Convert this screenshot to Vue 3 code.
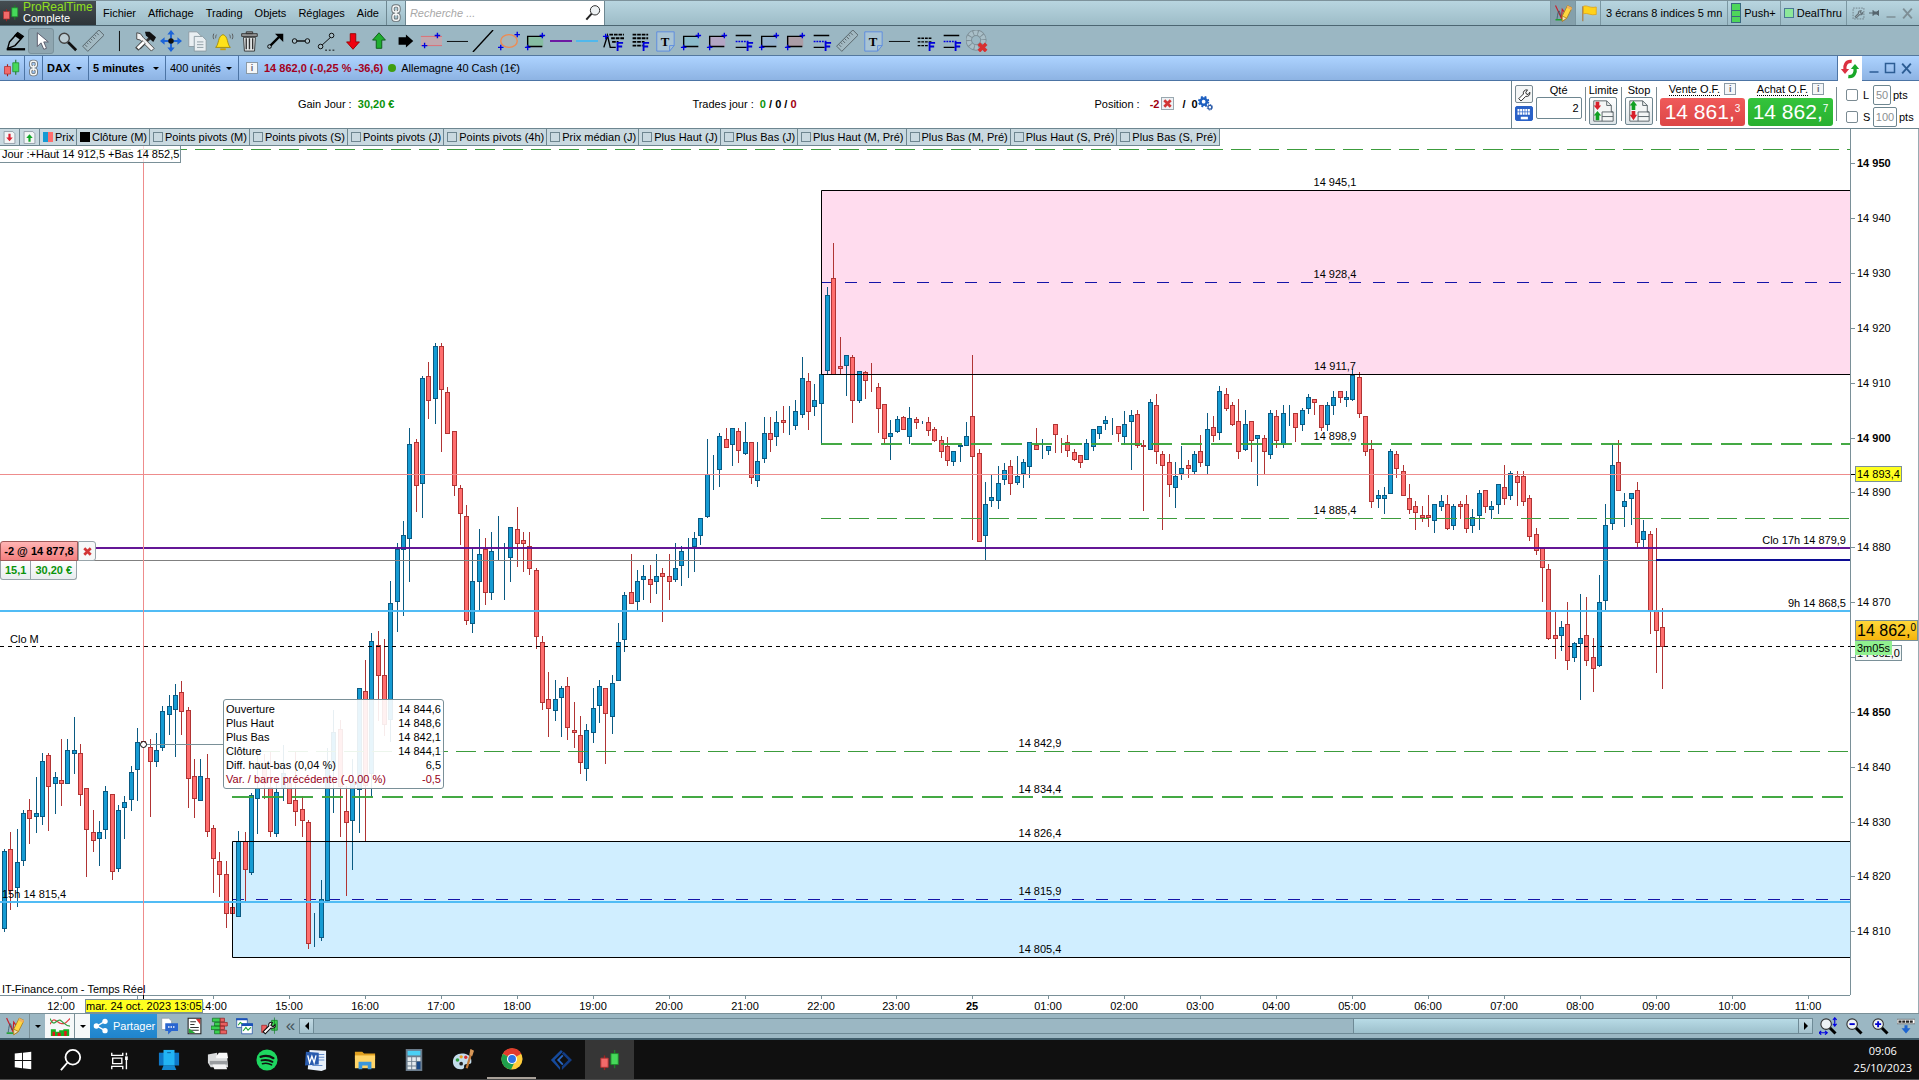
<script setup>
const menus = ['Fichier', 'Affichage', 'Trading', 'Objets', 'Réglages', 'Aide']

const F = '<path d="M17 23V14h6M17 18h5" fill="none" stroke="#0000d8" stroke-width="2"/>'
const plus = (x, y) => `<path d="M${x - 3} ${y}h6M${x} ${y - 3}v6" stroke="#0000e0" stroke-width="1.500"/>`
const zone = (fill, line) =>
  `<path d="M3 7h18v11H3z" fill="${fill}"/><path d="M4 18V7h17M3 18h17" fill="none" stroke="${line}" stroke-width="1.500"/>` + plus(20, 6) + plus(4, 19)
const levels =
  '<path d="M4 6h17M4 19h12" stroke="#000" stroke-width="1.500"/><path d="M4 12.500h15" stroke="#0000e0" stroke-dasharray="2 1" stroke-width="1.500"/>' + F
const fibo = '<path d="M5 5h17M5 9h17M5 13h13M5 17h11" stroke="#000" stroke-width="2" stroke-dasharray="4 1"/>' + F
const ruler =
  '<g transform="rotate(-45 12 12)"><path d="M0 8h25v8H0z" fill="#a3bac3" stroke="#59666c"/><path d="M3 8v4M6 8v3M9 8v4M12 8v3M15 8v4M18 8v3M21 8v4" stroke="#59666c"/></g>'
const note =
  '<path d="M3 2h19v15l-5 6H3z" fill="#a9c4d4" stroke="#5a8ae0"/><path d="M17 23v-6h5" fill="none" stroke="#5a8ae0"/><text x="12" y="17" text-anchor="middle" font-family="Liberation Serif, serif" font-weight="bold" font-size="14">T</text>'
const candles =
  '<path d="M17 1v20" stroke="#1f7a2a" stroke-width="1.500"/><path d="M6 7v16" stroke="#a02020" stroke-width="1.500"/><path d="M2 10h8v10H2z" fill="#f26a6a" stroke="#b03030"/><path d="M13 5h8v12h-8z" fill="#46d95a" stroke="#1f8a2c"/>'
const link =
  '<g fill="none" stroke="#6d7478" stroke-width="4.500"><rect x="8" y="2.500" width="8" height="8" rx="3"/><rect x="8" y="13.500" width="8" height="8" rx="3"/><path d="M12 8v8"/></g><g fill="none" stroke="#f6f8f8" stroke-width="2"><rect x="8" y="2.500" width="8" height="8" rx="3"/><rect x="8" y="13.500" width="8" height="8" rx="3"/><path d="M12 8v8"/></g>'
const wrench =
  '<path d="M3 20l8-8c-1-4 2-8 7-7l-3 4 1 3 3 1 3-4c1 5-3 8-7 7l-8 8z" fill="#fff" stroke="#111" stroke-width="1.500"/>'
const chartPencil =
  '<path d="M2 2l8 17 1-12 6 8" fill="none" stroke="#c8202c" stroke-width="1.500"/><path d="M4 20c2-14 3-14 5-3" fill="none" stroke="#305060"/><path d="M2 21h9" stroke="#1fa030" stroke-width="2"/><path d="M18 2l6 3-7 14-6 4v-7z" fill="#ffd640" stroke="#a87818"/><path d="M11 16l6 3-6 4z" fill="#f4e2b8" stroke="#a87818"/><path d="M18 2l6 3-1 3-6-3z" fill="#f0b060"/>'
const zoomGlass = (inside) =>
  `<path d="M14 14l8 8" stroke="#000" stroke-width="4"/><circle cx="9.500" cy="9.500" r="7" fill="#eef3f5" stroke="#333" stroke-width="1.500"/>${inside}`
const orders = (up, down) =>
  `<path d="M3 2h14l5 5v7h2v10H3z" fill="#f4f6f6" stroke="#555f64"/><path d="M17 2v5h5M12 14h12M12 19h12M12 14v10" fill="none" stroke="#555f64"/><path d="${up}" fill="#12a022"/><path d="${down}" fill="#d81f2a"/>`

const icons = {
  candles, link, wrench, chartPencil,
  pen: '<path d="M4 20L6 13 15 3l6 4-9 10z" fill="#a9bfc8" stroke="#000" stroke-width="1.500"/><path d="M14 3l7 4-3 4-7-5z"/><path d="M3 21h20" stroke="#000" stroke-width="2.500"/>',
  cursor: '<path d="M8 3v15l4-4 3 7 3-1-3-7h5z" fill="#fff" stroke="#556"/>',
  glass: '<path d="M13 13l9 9" stroke="#111" stroke-width="3"/><circle cx="9" cy="9" r="5.500" fill="#bccdd4" stroke="#444" stroke-width="1.500"/>',
  ruler,
  bar: '<path d="M12.500 1v22" stroke="#000"/>',
  tools: '<path d="M6 20L19 7" stroke="#333" stroke-width="3"/><path d="M12 2h5l7 6-3 5-8-7z" fill="#111"/><path d="M3 3l4 1 3 4 12 12-3 3L7 11 3 10z" fill="#f2f2f2" stroke="#444"/><path d="M3 21l8-8" stroke="#444" stroke-width="5"/><path d="M4 20l7-7" stroke="#fff" stroke-width="3"/>',
  move: '<g fill="#1d64d8"><path d="M12 0l4 5H8zM12 24l4-5H8zM0 12l5-4v8zM24 12l-5-4v8z"/><path d="M11 4h2v16h-2zM4 11h16v2H4z"/></g><circle cx="12" cy="12" r="3" fill="#111"/>',
  copy: '<g fill="#e9eff2" stroke="#8b9aa2"><path d="M3 2h9l4 4v12H3z"/><path d="M9 7h9l4 4v12H9z"/></g><path d="M12 13h7M12 16h7M12 19h7" stroke="#8b9aa2"/>',
  bell: '<path d="M4 19c4-4 2-12 8-14 6 2 4 10 8 14z" fill="#ffe21a" stroke="#a08a10"/><path d="M9 20h6v2H9z" fill="#d0a000"/><path d="M2 4c-1 2-1 4 0 6M22 4c1 2 1 4 0 6M5 5c-1 1-1 3-1 4M19 5c1 1 1 3 1 4" fill="none" stroke="#555"/>',
  trash: '<path d="M6 8h13l-1 15H7z" fill="#e4e8e8" stroke="#333"/><path d="M4 4h17v3H4zM9 2h7v2H9z" fill="#999" stroke="#333"/><path d="M9 9v12M12.500 9v12M16 9v12" stroke="#333" stroke-width="1.500"/>',
  arrow: '<path d="M7 17L17 7" stroke="#000" stroke-width="2.500"/><path d="M12 4h9v9z"/><circle cx="6" cy="18" r="2" fill="#a9bfc8" stroke="#000"/>',
  segment: '<path d="M7 12h10" stroke="#000" stroke-width="1.500"/><circle cx="5" cy="12" r="2.500" fill="#a9bfc8" stroke="#000"/><circle cx="19" cy="12" r="2.500" fill="#a9bfc8" stroke="#000"/>',
  slope: '<path d="M6 17L17 7" stroke="#000"/><circle cx="5" cy="18" r="2.500" fill="#a9bfc8" stroke="#000"/><circle cx="17" cy="6" r="2.500" fill="#a9bfc8" stroke="#000"/><path d="M10 22h12" stroke="#000" stroke-dasharray="2 2"/>',
  down: '<path d="M9 4h6v9h4l-7 8-7-8h4z" fill="#f00010" stroke="#900"/>',
  up: '<path d="M9 20h6v-9h4l-7-8-7 8h4z" fill="#1fae2f" stroke="#0b5a15"/>',
  right: '<path d="M5 8h8V5l8 7-8 7v-3H5z"/>',
  channel: '<path d="M1 7h23v10H1z" fill="#bfa9b0"/><path d="M1 7h23M1 17h23" stroke="#e06a70"/>' + plus(19, 6) + plus(5, 17),
  line: '<path d="M1 12.500h23" stroke="#000"/>',
  diagonal: '<path d="M1 24L23 0" stroke="#000" stroke-width="1.500"/>',
  ellipse: '<ellipse cx="12" cy="12" rx="9" ry="7" fill="#a9b6b8" stroke="#f08a50" stroke-width="1.500"/>' + plus(21, 5) + plus(3, 19),
  greenZone: zone('#86bda2', '#000'),
  purple: '<path d="M0 12h24" stroke="#6a0aa0" stroke-width="2"/>',
  sky: '<path d="M0 12h24" stroke="#4ab8f0" stroke-width="2"/>',
  pattern: '<path d="M2 19L6 6l3 13h6" fill="none" stroke="#000" stroke-width="1.500"/><path d="M8 5h16M10 9h14M11 13h7" stroke="#000" stroke-width="2" stroke-dasharray="4 1"/>' + plus(4, 7) + F,
  fibo, note, levels,
  tealZone: zone('#8cbccb', '#000'),
  mauveZone: zone('#b3a6c4', '#000'),
  blueZone: zone('#94b2cc', '#000'),
  roseZone: zone('#ab9da6', '#000'),
  smallFibo: '<path d="M4 9h15M4 13h15M4 17h11" stroke="#000" stroke-width="1.500" stroke-dasharray="3 1"/>' + F,
  donut: '<circle cx="11" cy="11" r="8" fill="none" stroke="#7e9098" stroke-width="7"/><circle cx="11" cy="11" r="8" fill="none" stroke="#a9bfc8" stroke-width="5" stroke-dasharray="4 1"/><path d="M14 15l8 8M22 15l-8 8" stroke="#d83030" stroke-width="4"/>',
  flag: '<path d="M5 3v20" stroke="#a88a60" stroke-width="2"/><path d="M6 3c5-2 8 3 17 1v10c-7 2-12-3-17-1z" fill="#ffd21a" stroke="#e0a010"/>',
  settings: '<path d="M2 2h20v20H2z" fill="none" stroke="#66757c" stroke-dasharray="3 2" stroke-width="1.500"/><path d="M6 18l6-6c-1-3 1-6 5-5l-2 3 2 2 3-2c0 4-3 5-6 4l-6 6z" fill="#b9cad1" stroke="#66757c" stroke-width="2"/>',
  pin: '<path d="M0 12h8M8 7v10l3-3h5l3 3V7l-3 3h-5z" fill="#56666e" stroke="#56666e" stroke-width="2"/>',
  min: '<path d="M3 20h18" stroke="currentColor" stroke-width="3"/>',
  max: '<path d="M3 3h18v18H3z" fill="none" stroke="currentColor" stroke-width="3"/>',
  close: '<path d="M4 3l16 18M20 3L4 21" stroke="currentColor" stroke-width="3.500"/>',
  refresh: '<path d="M14 3c-7-1-9 5-8 10" fill="none" stroke="#dc3040" stroke-width="4"/><path d="M1 12h10l-5 6z" fill="#dc3040"/><path d="M10 21c7 1 9-5 8-10" fill="none" stroke="#18a828" stroke-width="4"/><path d="M13 12h10l-5-6z" fill="#18a828"/>',
  keyboard: '<path d="M2 5h20M2 10h20" stroke="#fff" stroke-width="4" stroke-dasharray="3 1"/><path d="M7 17h11" stroke="#fff" stroke-width="4"/>',
  limit: orders('M7 13l4 5H9v5H5v-5H3z', 'M5 3h4v4h2l-4 5-4-5h2z'),
  stop: orders('M7 2l4 5H9v5H5V7H3z', 'M5 13h4v4h2l-4 6-4-6h2z'),
  cross: '<path d="M5 5l14 14M19 5L5 19" stroke="#d23636" stroke-width="6"/>',
  gears: '<circle cx="9" cy="9" r="5" fill="none" stroke="#1d5fc0" stroke-width="4"/><circle cx="9" cy="9" r="7.500" fill="none" stroke="#1d5fc0" stroke-width="3" stroke-dasharray="3 3"/><circle cx="19" cy="18" r="3" fill="#fff" stroke="#2a5aa8" stroke-width="2"/><circle cx="19" cy="18" r="4.500" fill="none" stroke="#2a5aa8" stroke-width="1.500" stroke-dasharray="2 1.500"/>',
  pageDown: '<path d="M2 1h16l4 4v18H2z" fill="#f4f6f6" stroke="#8795a0" stroke-width="1.500"/><path d="M10 5h4v7h4l-6 7-6-7h4z" fill="#dc2030"/>',
  pageUp: '<path d="M2 1h16l4 4v18H2z" fill="#f4f6f6" stroke="#8795a0" stroke-width="1.500"/><path d="M10 20h4v-7h4l-6-7-6 7h4z" fill="#12a828"/>',
  curves: '<path d="M0 10C5-1 8 8 13 9s6-1 11-6" fill="none" stroke="#e04040" stroke-width="1.500"/><path d="M0 3c5 12 8 0 12 2s6 7 12 7" fill="none" stroke="#30a040" stroke-width="1.500"/><path d="M1 16h6v3h4v-2h5v-1h7v8H1z" fill="#16b020"/><path d="M3 19h3v5H3zM9 20h4v4H9zM17 18h3v6h-3z" fill="#e01818"/>',
  share: '<path d="M18 5L6 12l12 7" fill="none" stroke="#fff" stroke-width="2"/><g fill="#fff"><circle cx="18" cy="5" r="4"/><circle cx="5" cy="12" r="4"/><circle cx="18" cy="19" r="4"/></g>',
  chat: '<path d="M1 1h10l4 4v12H1z" fill="#fff" stroke="#8a98a0"/><path d="M6 8h18v11h-9l-5 5v-5H6z" fill="#2a66d0"/><path d="M10 13.500h10" stroke="#fff" stroke-width="2" stroke-dasharray="2 1.500"/>',
  report: '<path d="M3 1h18v22H3z" fill="#fff" stroke="#222" stroke-width="1.500"/><path d="M6 6h8M6 10h6M6 14h12M6 18h12" stroke="#333" stroke-width="1.500"/><path d="M14 2h6v8z" fill="#d83030"/><path d="M4 22v-7l9 7z" fill="#28a838"/>',
  book: '<g fill="#3ad050" stroke="#107020"><path d="M2 1h11v5H2zM5 7h8v5H5zM0 12h13v5H0zM5 18h8v5H5z"/></g><g fill="#e86060" stroke="#902020"><path d="M13 1h6v5h-6zM13 7h10v5H13zM13 12h6v5h-6zM13 18h9v5h-9z"/></g>',
  windows: '<g fill="#fff" stroke="#1848a0"><path d="M1 2h15v12H1z"/><path d="M8 9h15v14H8z"/></g><path d="M0 1h16v3H0zM8 8h16v4H8z" fill="#1a50b8"/><path d="M3 11l3-4 3 2M10 19l4-5 3 4 4-4" fill="none" stroke="#18a030" stroke-width="1.500"/>',
  wrenchCandles: '<path d="M1 11h7v10H1z" fill="#f06060" stroke="#a02020"/><path d="M15 4h8v14h-8zM19 0v23" fill="#40d050" stroke="#108020"/><path d="M3 20l8-8c-1-4 2-6 5-5l-2 4 3 2 3-3c1 4-2 6-6 5l-8 8z" fill="#fff" stroke="#111" stroke-width="1.500"/>',
  zoomFit: zoomGlass('<path d="M21 2v9M18.500 4L21 1l2.500 3M18.500 9l2.500 3 2.500-3M1 21h9M3 18.500L0 21l3 2.500M8 18.500l3 2.500-3 2.500" fill="none" stroke="#0000e0" stroke-width="1.500"/>'),
  zoomOut: zoomGlass('<path d="M6 9.500h7" stroke="#0000d0" stroke-width="2.500"/>'),
  zoomIn: zoomGlass('<path d="M5.500 9.500h8M9.500 5.500v8" stroke="#0000d0" stroke-width="2.500"/>'),
  dock: '<path d="M0 3h24v6H0z" fill="#fff" stroke="#666"/><path d="M2 6h20" stroke="#222" stroke-width="3" stroke-dasharray="4 1"/><path d="M10 11h4v4h4l-6 7-6-7h4z" fill="#1d64d0"/>',
  win: '<g fill="#fff"><path d="M3 5l8-1v8H3zM12 4l9-1v9h-9zM3 13h8v8l-8-1zM12 13h9v9l-9-1z"/></g>',
  find: '<circle cx="14" cy="9" r="8" fill="none" stroke="#fff" stroke-width="2"/><path d="M8 15l-7 8" stroke="#fff" stroke-width="2"/>',
  tasks: '<g fill="none" stroke="#fff" stroke-width="1.500"><path d="M3 4v3h12V4M4 10h10v6H4zM3 22v-3h12v3M19 4v3M19 12v10"/></g><path d="M17.500 8h3v4h-3z" fill="#fff"/>',
  pc: '<path d="M1 4h22v14H1z" fill="#0e78c8"/><path d="M6 1h12v17H6z" fill="#22b4f4"/><path d="M6 18h12l2 5H4z" fill="#1488d0"/><path d="M10 4h4" stroke="#0a5a98"/>',
  printer: '<path d="M1 6l10-2v5h11l1 11H4l-3-5z" fill="#d9dbdc"/><path d="M10 8l3-4h9l1 6H10z" fill="#f8f8f8"/><path d="M3 13h19v4H3z" fill="#9a9da0"/><path d="M6 17h14l2 5H8z" fill="#f4f4f4"/>',
  spotify: '<circle cx="12" cy="12" r="11.500" fill="#1ed760"/><g fill="none" stroke="#111" stroke-linecap="round"><path d="M5 8.500c5-1.500 10-1 14 1.500" stroke-width="2.500"/><path d="M6 12.500c4-1 8-.7 12 1.500" stroke-width="2"/><path d="M7 16c3-.8 7-.5 10 1.300" stroke-width="1.700"/></g>',
  word: '<path d="M5 1l18 1v20l-5 2-15-2z" fill="#e8f0fa"/><path d="M12 6h9M12 9h9M12 12h9M8 18h11" stroke="#5a86c8"/><path d="M1 3l14 1v13L0 18z" fill="#2a5cae"/><path d="M3 7l2 8 2.500-7L10 15l2-8" fill="none" stroke="#fff" stroke-width="1.500"/>',
  folder: '<path d="M1 3h8l2 2h12v6H1z" fill="#e0a020"/><path d="M1 7h22v14H1z" fill="#ffd568"/><path d="M5 22v-8h14v8h-4v-4H9v4z" fill="#3a96dc"/>',
  calc: '<path d="M3 0h18v24H3z" fill="#6b7c8c"/><path d="M5 2h14v5H5z" fill="#4ad0f4"/><g fill="#e4eaee"><path d="M5 9h4v4H5zM10 9h4v4h-4zM5 14h4v4H5zM10 14h4v4h-4zM5 19h4v3H5zM10 19h4v3h-4zM15 9h4v4h-4z"/></g><path d="M15 14h4v8h-4z" fill="#1a4a88"/>',
  paint: '<path d="M1 14C1 7 7 4 13 5s9 5 8 10c-2 3-5 0-7 2s1 4-3 5C5 23 1 19 1 14z" fill="#c4dcec"/><circle cx="6" cy="12" r="2" fill="#30a040"/><circle cx="10" cy="8.500" r="1.800" fill="#e8a020"/><circle cx="15" cy="9" r="1.800" fill="#d83030"/><circle cx="10" cy="16" r="2" fill="#222"/><path d="M22 1l-6 20" stroke="#c07838" stroke-width="2.500"/><path d="M20 0l4 2-2 6-3-2z" fill="#d89858"/>',
  chrome: '<circle cx="12" cy="12" r="11.500" fill="#ffcd3c"/><path d="M12 12L2 6.200A11.500 11.500 0 0 1 22 6.200z" fill="#e33b2e"/><path d="M2 6.200A11.500 11.500 0 0 0 11 23.500L15 15 12 12z" fill="#1fa04c"/><path d="M12 6.500h10.300L22 6 12 .5z" fill="#e33b2e"/><circle cx="12" cy="12" r="5.500" fill="#fff"/><circle cx="12" cy="12" r="4.300" fill="#2f74e8"/>',
  diamond: '<path d="M12 1l2 2-9 9 6 8v3L1 12z" fill="#164a9c"/><path d="M15 3l9 9-11 11v-4l7-7-7-7z" fill="#123c84"/><path d="M14 7l-5 5 5 5" fill="none" stroke="#2866c0" stroke-width="2"/>'
}

const tools = [
  'pen', 'cursor', 'glass', 'ruler', 'bar', 'tools', 'move', 'copy', 'bell', 'trash', 'arrow', 'segment', 'slope',
  'down', 'up', 'right', 'channel', 'line', 'diagonal', 'ellipse', 'greenZone', 'purple', 'sky', 'pattern', 'fibo',
  'note', 'tealZone', 'mauveZone', 'levels', 'blueZone', 'roseZone', 'levels', 'ruler', 'note', 'line', 'smallFibo',
  'levels', 'donut'
]

const legend = [
  'Points pivots (M)', 'Points pivots (S)', 'Points pivots (J)', 'Points pivots (4h)', 'Prix médian (J)',
  'Plus Haut (J)', 'Plus Bas (J)', 'Plus Haut (M, Pré)', 'Plus Bas (M, Pré)', 'Plus Haut (S, Pré)', 'Plus Bas (S, Pré)'
]

const bottomTools = ['chat', 'report', 'book', 'windows', 'wrenchCandles']
const zoomTools = ['zoomFit', 'zoomOut', 'zoomIn', 'dock']
const apps = ['win', 'find', 'tasks', 'pc', 'printer', 'spotify', 'word', 'folder', 'calc', 'paint', 'chrome', 'diamond', 'candles']

const tooltip = [
  ['Ouverture', '14 844,6'],
  ['Plus Haut', '14 848,6'],
  ['Plus Bas', '14 842,1'],
  ['Clôture', '14 844,1'],
  ['Diff. haut-bas (0,04 %)', '6,5'],
  ['Var. / barre précédente (-0,00 %)', '-0,5']
]

/* Plot geometry: the plot starts 129px below the window top */
const TOP = 129
const priceY = (p) => Math.round(163.3 + (14950 - p) * 5.486) - TOP
const prices = Array.from({ length: 15 }, (_, i) => {
  const p = 14950 - i * 10
  return { label: `14 ${p - 14000}`, y: priceY(p), bold: p % 50 === 0 }
}).filter((p) => p.label !== '14 860')

const hours = Array.from({ length: 24 }, (_, i) => {
  const h = (12 + i) % 24
  return { label: h === 0 ? '25' : `${String(h).padStart(2, '0')}:00`, x: Math.round(61 + i * 75.95), bold: h === 0 }
})

const levelLabels = [
  [1335, 186, '14 945,1'], [1335, 278, '14 928,4'], [1335, 370, '14 911,7'], [1335, 440, '14 898,9'], [1335, 514, '14 885,4'],
  [1040, 747, '14 842,9'], [1040, 793, '14 834,4'], [1040, 837, '14 826,4'], [1040, 895, '14 815,9'], [1040, 953, '14 805,4']
]

/* Candles by chart tile: x, high, low, open, close, in thirds of a pixel from the tile's corner */
const tiles = [
  [0, 500, `13 1047 1295 1286 1053|31 997 1229 1048 1172|52 988 1220 1162 1087|70 930 1097 1081 940|88 898 1031 931 955|109 831 998 948 940|127 759 973 949 784|145 760 990 766 859|166 817 941 850 832|184 717 917 841 850|202 717 851 850 751|223 652 819 760 751|241 733 917 760 883|259 865 1130 865 988|280 931 1055 997 1021|298 964 1097 1015 997|316 859 1016 988 874|337 883 1138 883 1114|355 916 1114 1105 931|373 889 1016 922 907|394 799 932 898 817|412 684 900 808 727|430 661 768 725 733|451 718 950 742 784|469 700 800 784 751|487 618 751 742 634|508 585 702 643 619|526 552 768 628 586|544 543 702 577 634|565 622 921 631 835|583 778 953 829 895|601 777 901 901 829|622 762 1010 835 994|640 976 1176 985 1075|658 1057 1190 1084 1123|679 1084 1283 1123 1240|697 1221 1242 1222 1240|715 993 1250 1249 1024|736 997 1203 1024 1108|754 880 1123 1117 886|772 760 1000 895 865|793 764 895 790 850|811 757 1010 862 994|829 835 1010 1000 877|850 737 900 862 820|868 845 910 850 910|886 757 977 900 934|907 889 1010 928 961|925 961 1345 967 1330|943 1240 1340 1322 1321|964 1140 1322 1312 1198|982 745 1203 1202 800|1000 631 936 790 697|1021 662 1010 688 860|1039 860 1185 934 967|1057 778 1109 961 840|1078 565 996 868 566|1096 480 1023 574 856|1114 399 889 820 424|1135 393 660 436 527|1153 418 705 527 673|1171 243 725 658 310|1192 130 395 304 148|1210 64 345 149 106`],
  [320, 320, `268 324 785 656 373|289 358 573 367 497|307 168 591 491 175|325 126 294 169 241|346 69 309 236 79|364 69 393 79 209|382 201 341 217 341|403 334 525 334 497|421 495 672 505 581|439 556 912 589 902|457 685 936 911 784|478 627 870 785 703|496 654 852 688 818|514 636 837 818 694|535 588 720 689 688|553 670 837 704 703|571 622 785 713 622|592 561 738 628 671|610 636 753 661 671|628 636 762 679 746|649 744 984 751 950|667 949 1167 967 1148|685 1057 1248 1138 1166|706 1081 1200 1172 1138|724 1098 1248 1133 1105|742 1072 1257 1099 1223|763 1147 1281 1231 1238|781 1188 1361 1246 1328|799 1213 1380 1346 1231|820 1105 1266 1238 1165|838 1081 1206 1157 1099|856 1105 1329 1105 1181|877 1065 1240 1190 1090|895 909 1082 1082 967|913 817 993 959 826|934 702 851 817 851|952 751 870 845 784|970 736 837 779 769|991 736 846 778 794|1009 702 819 785 769|1027 744 903 760 770|1048 702 837 769 785|1066 670 785 779 745|1084 679 795 737 694|1105 654 771 689 688|1123 636 753 680 655|1141 595 672 647 596|1162 357 591 590 463|1180 405 507 458 457|1198 340 498 449 349|1219 324 383 358 383|1237 324 435 374 325|1255 324 426 334 391|1276 306 402 401 367|1294 367 491 367 473|1312 367 498 482 424|1333 291 426 416 340|1351 291 393 340 359|1369 273 375 350 307|1390 258 336 301 307|1408 258 342 325 324|1426 240 327 317 274|1447 111 293 284 175|1465 159 327 184 275|1483 192 285 260 241`],
  [780, 150, `124 673 882 761 673|142 411 672 662 436|160 279 672 385 672|181 561 672 649 656|199 615 735 647 616|217 615 816 622 752|238 663 758 752 664|256 663 744 667 692|274 639 723 700 701|295 699 846 712 776|313 763 880 763 866|331 810 927 860 850|352 798 846 845 808|370 798 839 802 839|388 771 879 860 805|409 801 834 808 818|427 813 819 815 814|445 801 855 817 842|463 831 873 838 872|484 858 921 871 905|502 861 945 889 932|520 903 945 935 904|541 885 933 889 886|559 816 887 887 859|577 615 1167 799 920|598 897 1175 910 1175|616 996 1227 1157 1063|634 975 1068 1052 1042|655 948 1074 1052 1000|673 939 1002 989 961|691 930 1032 949 1001|712 918 1002 998 979|730 927 1011 971 937|748 877 981 950 877|769 834 899 886 899|787 867 924 887 886|805 888 912 902 889|826 823 906 823 854|844 865 906 865 866|862 855 918 877 902|883 897 930 907 929|901 915 951 916 938|919 867 929 929 880|940 837 900 890 838|958 828 864 851 829|976 798 837 821 811|997 804 852 821 820|1015 828 873 829 851|1033 783 882 860 823|1054 780 957 815 796|1072 780 891 793 887|1090 870 1080 886 889|1111 747 899 899 757|1129 732 939 766 905|1147 903 1137 913 947|1168 912 1038 937 1004|1186 936 1071 1013 979`],
  [1180, 340, `4 318 419 401 385|25 361 411 376 386|43 333 402 395 343|61 285 378 334 368|82 219 402 377 268|100 228 303 262 287|118 138 297 278 154|139 144 212 163 206|157 186 255 196 254|175 177 354 244 335|196 210 330 328 253|214 244 363 244 302|232 285 435 295 286|253 285 402 295 335|271 210 354 344 220|289 210 321 229 302|310 195 321 312 220|328 195 255 230 229|346 220 303 220 263|367 204 270 254 211|385 162 221 206 172|403 178 222 178 188|424 196 270 196 263|442 186 270 254 196|460 153 222 196 172|481 154 188 154 173|499 153 198 179 172|517 87 180 179 105|538 96 231 112 221|556 229 345 229 335|574 300 501 328 485|595 450 501 475 466|613 441 519 475 466|631 327 461 461 334|649 333 411 343 386|670 375 467 394 467|688 432 519 475 509|706 483 567 499 518|727 498 543 526 533|745 465 558 526 533|763 493 576 542 493|784 465 510 500 484|802 465 567 493 566|820 493 567 557 499|841 483 534 493 500|859 465 576 493 566|877 507 576 557 532|898 450 567 527 460|916 451 518 451 500|934 483 534 509 499|955 433 519 493 433|973 375 492 442 476|991 393 477 467 400|1012 393 495 409 428|1030 393 495 409 485|1048 465 600 475 590|1069 564 642 583 632|1087 626 783 626 683|1105 672 897 688 896|1126 816 954 886 896|1144 843 930 887 862|1162 786 987 853 962|1183 908 963 953 910|1201 762 1077 911 895|1219 771 977 886 962|1240 894 1053 952 986|1258 705 978 977 787|1276 492 807 782 556|1297 315 567 551 376|1315 300 452 367 452|1333 459 558 500 484|1354 460 552 476 460|1372 426 618 451 608|1390 540 618 599 574|1411 573 879 583 812|1429 564 996 812 872|1447 804 1044 862 920`]
]

const series = tiles.flatMap(([ox, oy, rows]) =>
  rows.split('|').map((row) => {
    const [x, high, low, open, close] = row.split(' ').map(Number)
    const y = (v) => oy + Math.floor(v / 3)
    const top = y(Math.min(open, close))
    const bottom = y(Math.max(open, close))
    return { x: ox + Math.floor(x / 3), high: y(high), low: y(low) + 1, top, height: bottom - top, up: close < open }
  })
)
</script>

<template>
  <div class="window">
    <header class="menubar">
      <div class="brand">
        <svg viewBox="0 0 24 24" width="18" height="20" v-html="icons.candles"></svg>
        <div class="brand-text"><span class="brand-name">ProRealTime</span><span class="brand-tier">Complete</span></div>
      </div>
      <nav class="menus"><button v-for="m in menus" :key="m">{{ m }}</button></nav>
      <button class="linkbox" aria-label="Lier"><svg viewBox="0 0 24 24" width="18" height="20" v-html="icons.link"></svg></button>
      <label class="search">
        <input type="text" placeholder="Recherche ..." aria-label="Recherche" />
        <svg viewBox="0 0 24 24" width="16" height="18"><circle cx="15" cy="8" r="7" fill="#eef2f4" stroke="#333" stroke-width="1.500" /><path d="M10 13l-8 9" stroke="#222" stroke-width="3" /></svg>
      </label>
      <div class="status">
        <button class="cell pressed" aria-label="Graphique"><svg viewBox="0 0 24 24" width="18" height="20" v-html="icons.chartPencil"></svg></button>
        <button class="cell flag" aria-label="Drapeau"><svg viewBox="0 0 24 24" width="18" height="18" v-html="icons.flag"></svg></button>
        <button class="cell">3 écrans 8 indices 5 mn</button>
        <button class="cell push"><span class="stack"><i></i><i></i><i></i></span>Push+</button>
        <button class="cell push"><span class="led"></span>DealThru</button>
        <div class="cell wins">
          <svg viewBox="0 0 24 24" width="13" height="13" v-html="icons.settings"></svg>
          <svg viewBox="0 0 24 24" width="12" height="12" v-html="icons.pin"></svg>
          <svg viewBox="0 0 24 24" width="12" height="12" v-html="icons.min"></svg>
          <svg viewBox="0 0 24 24" width="13" height="13" v-html="icons.close"></svg>
        </div>
      </div>
    </header>

    <div class="toolbar">
      <button v-for="(t, i) in tools" :key="i" :class="{ active: t === 'cursor' }" :aria-label="t">
        <svg viewBox="0 0 24 24" width="22" height="22" v-html="icons[t]"></svg>
      </button>
    </div>

    <div class="titlebar">
      <span class="tcell logo"><svg viewBox="0 0 24 24" width="18" height="20" v-html="icons.candles"></svg></span>
      <span class="tcell chain"><svg viewBox="0 0 24 24" width="17" height="20" v-html="icons.link"></svg></span>
      <span class="tcell drop"><select class="w-sym" aria-label="Valeur"><option>DAX</option></select><i class="caret"></i></span>
      <span class="tcell drop"><select class="w-time" aria-label="Unité de temps"><option>5 minutes</option></select><i class="caret"></i></span>
      <span class="tcell drop"><select class="w-units" aria-label="Historique"><option>400 unités</option></select><i class="caret"></i></span>
      <span class="info-i">i</span>
      <strong class="quote">14 862,0 (-0,25 % -36,6)</strong>
      <span class="dot"></span>
      <span>Allemagne 40 Cash (1€)</span>
      <span class="refresh"><svg viewBox="0 0 24 24" width="20" height="20" v-html="icons.refresh"></svg></span>
      <span class="winbtns">
        <svg viewBox="0 0 24 24" width="12" height="12" v-html="icons.min"></svg>
        <svg viewBox="0 0 24 24" width="12" height="12" v-html="icons.max"></svg>
        <svg viewBox="0 0 24 24" width="13" height="13" v-html="icons.close"></svg>
      </span>
    </div>

    <section class="trade">
      <div class="summary">
        <span>Gain Jour : <b class="gain">&nbsp;30,20 €</b></span>
        <span>Trades jour : &nbsp;<b class="gain">0</b> <b>/ 0 /</b> <b class="loss">0</b></span>
        <span class="pos">Position : <b class="loss">-2</b><svg class="xbox" viewBox="0 0 24 24" width="13" height="13" v-html="icons.cross"></svg><b>/ &nbsp;0</b><svg viewBox="0 0 24 24" width="15" height="15" v-html="icons.gears"></svg></span>
      </div>
      <div class="order">
        <div class="col side">
          <button class="sq" aria-label="Options"><svg viewBox="0 0 24 24" width="14" height="14" v-html="icons.wrench"></svg></button>
          <button class="sq kb" aria-label="Clavier"><svg viewBox="0 0 24 20" width="16" height="13" v-html="icons.keyboard"></svg></button>
        </div>
        <div class="col qty"><label for="qty">Qté</label><input id="qty" type="text" value="2" /></div>
        <i class="vsep"></i>
        <div class="col"><span>Limite</span><button class="big" aria-label="Limite"><svg viewBox="0 0 26 26" width="24" height="24" v-html="icons.limit"></svg></button></div>
        <i class="vsep"></i>
        <div class="col"><span>Stop</span><button class="big" aria-label="Stop"><svg viewBox="0 0 26 26" width="24" height="24" v-html="icons.stop"></svg></button></div>
        <i class="vsep"></i>
        <div class="col"><span class="dealhead"><u>Vente O.F.</u><i class="info-i">i</i></span><button class="sell">14 861,<sup>3</sup></button></div>
        <div class="col"><span class="dealhead"><u>Achat O.F.</u><i class="info-i">i</i></span><button class="buy">14 862,<sup>7</sup></button></div>
        <i class="vsep"></i>
        <div class="col protect">
          <div><label><input type="checkbox" /> <span>L</span></label><input class="pts" type="text" value="50" size="2" aria-label="Limite en points" />pts</div>
          <div><label><input type="checkbox" /> <span>S</span></label><input class="pts wide" type="text" value="100" size="3" aria-label="Stop en points" />pts</div>
        </div>
      </div>
    </section>

    <main class="chart">
      <div class="plot">
        <svg class="canvas" width="100%" height="100%">
          <g :transform="`translate(0 ${-TOP})`">
            <line class="thin" x1="-1" x2="100%" y1="149.500" y2="149.500" />
            <rect x="821" y="190" width="100%" height="184" fill="#ffdcee" />
            <rect x="232" y="841" width="100%" height="116" fill="#d0eeff" />
            <line class="mid" x1="821" x2="100%" y1="282.500" y2="282.500" />
            <line class="mid" x1="232" x2="100%" y1="899.500" y2="899.500" />
            <g v-for="(c, i) in series" :key="i" :class="c.up ? 'up' : 'dn'">
              <path :d="`M${c.x + 0.5} ${c.high}V${c.low}`" />
              <rect :x="c.x - 1.5" :y="c.top + 0.5" width="4" :height="c.height" />
            </g>
            <path d="M5000 190.500H821.500V374.500H5000M5000 841.500H232.500V957.500H5000" fill="none" stroke="#000" />
            <line class="thin" x1="821" x2="100%" y1="518.500" y2="518.500" />
            <line class="thin" x1="232" x2="100%" y1="751.500" y2="751.500" />
            <line class="thick" x1="821" x2="100%" y1="444" y2="444" />
            <line class="thick" x1="232" x2="100%" y1="797" y2="797" />
            <line x1="0" x2="100%" y1="560.500" y2="560.500" stroke="#808080" />
            <line x1="0" x2="100%" y1="548" y2="548" stroke="#5c0a90" stroke-width="2" stroke-opacity="0.950" />
            <line x1="1656" x2="100%" y1="560" y2="560" stroke="#0c0c94" stroke-width="2" />
            <line x1="0" x2="100%" y1="611" y2="611" stroke="#48b8f4" stroke-width="2" stroke-opacity="0.950" />
            <line x1="0" x2="100%" y1="902" y2="902" stroke="#48b8f4" stroke-width="2" stroke-opacity="0.950" />
            <line x1="0" x2="100%" y1="646.500" y2="646.500" stroke="#000" stroke-dasharray="4 4" />
            <path class="cross" d="M0 474.500H5000M143.500 146V3000" />
            <line x1="144" x2="224" y1="744.500" y2="744.500" stroke="#7a9098" />
            <circle cx="143.500" cy="744.500" r="3" fill="#fff" stroke="#000" />
            <text v-for="l in levelLabels" :key="l[2]" :x="l[0]" :y="l[1]" text-anchor="middle">{{ l[2] }}</text>
            <text x="10" y="643">Clo M</text>
            <text x="2" y="898">15h 14 815,4</text>
          </g>
        </svg>
        <div class="legend">
          <button class="page" aria-label="Réduire"><svg viewBox="0 0 24 24" width="13" height="13" v-html="icons.pageDown"></svg></button>
          <button class="page" aria-label="Agrandir"><svg viewBox="0 0 24 24" width="13" height="13" v-html="icons.pageUp"></svg></button>
          <button><i class="swatch duo"></i>Prix</button>
          <button><i class="swatch black"></i>Clôture (M)</button>
          <label v-for="l in legend" :key="l"><input type="checkbox" />{{ l }}</label>
        </div>
        <div class="day">Jour :+Haut 14 912,5 +Bas 14 852,5</div>
        <div class="tag clo">Clo 17h 14 879,9</div>
        <div class="tag nine">9h 14 868,5</div>
        <div class="position">
          <div class="prow"><b class="entry">-2 @ 14 877,8</b><button aria-label="Fermer la position"><svg viewBox="0 0 24 24" width="11" height="11" v-html="icons.cross"></svg></button></div>
          <div class="prow pnl"><b>15,1</b><b>30,20 €</b></div>
        </div>
        <div class="tooltip">
          <div v-for="t in tooltip" :key="t[0]" class="trow"><span>{{ t[0] }}</span><span>{{ t[1] }}</span></div>
        </div>
        <div class="source">IT-Finance.com - Temps Réel</div>
      </div>
      <div class="prices">
        <svg width="100%" height="100%">
          <g v-for="p in prices" :key="p.label">
            <path :d="`M0 ${p.y + 0.5}h4`" stroke="#7a9098" />
            <text x="6" :y="p.y + 4" :font-weight="p.bold ? 'bold' : 'normal'">{{ p.label }}</text>
          </g>
          <path d="M0 345.500h4M0 517.500h4" stroke="#000" />
          <path d="M0 528.500h4" stroke="#7a9098" />
        </svg>
        <span class="ptag cursor-price">14 893,4</span>
        <span class="ptag close-price">14 862,0</span>
        <span class="ptag last">14 862,<sup>0</sup></span>
        <span class="ptag timer">3m05s</span>
      </div>
    </main>

    <div class="times">
      <svg width="100%" height="18">
        <g v-for="h in hours" :key="h.x">
          <path :d="`M${h.x + 0.5} 0v4`" stroke="#7a9098" />
          <text :x="h.x" y="15" text-anchor="middle" :font-weight="h.bold ? 'bold' : 'normal'">{{ h.label }}</text>
        </g>
        <path d="M143.500 0v4" stroke="#000" />
      </svg>
      <span class="time-cursor">mar. 24 oct. 2023 13:05</span>
    </div>

    <div class="footer">
      <button class="fbtn" aria-label="Dessin"><svg viewBox="0 0 24 24" width="19" height="20" v-html="icons.chartPencil"></svg></button>
      <button class="fdrop" aria-label="Choix du dessin"><i class="caret"></i></button>
      <button class="fbtn white" aria-label="Indicateurs"><svg viewBox="0 0 24 24" width="20" height="20" v-html="icons.curves"></svg></button>
      <button class="fdrop white" aria-label="Choix des indicateurs"><i class="caret"></i></button>
      <button class="sharebtn"><svg viewBox="0 0 24 24" width="16" height="18" v-html="icons.share"></svg>Partager</button>
      <button v-for="b in bottomTools" :key="b" class="ftool" :aria-label="b"><svg viewBox="0 0 24 24" width="17" height="18" v-html="icons[b]"></svg></button>
      <span class="chev">«</span>
      <div class="scroll">
        <button aria-label="Défiler à gauche"><i class="tri left"></i></button>
        <div class="track"><div class="thumb"></div></div>
        <button aria-label="Défiler à droite"><i class="tri"></i></button>
      </div>
      <button v-for="b in zoomTools" :key="b" class="ftool zoom" :aria-label="b"><svg viewBox="0 0 24 24" width="18" height="18" v-html="icons[b]"></svg></button>
    </div>

    <footer class="taskbar">
      <button v-for="a in apps" :key="a" :class="a" :aria-label="a"><svg viewBox="0 0 24 24" width="22" height="22" v-html="icons[a]"></svg></button>
      <div class="clock"><span>09:06</span><span>25/10/2023</span></div>
    </footer>
  </div>
</template>

<style>
body {
  margin: 0;
}
</style>

<style scoped>
.window {
  display: flex;
  flex-direction: column;
  min-height: 100vh;
  background: #fff;
  color: #000;
  font-family: "Liberation Sans", Arial, sans-serif;
  font-size: 11px;
  line-height: 14px;
  overflow: hidden;
}
.window * {
  box-sizing: border-box;
}
svg {
  display: block;
  flex: none;
}
button,
input,
select {
  margin: 0;
  padding: 0;
  border: 0;
  background: none;
  color: inherit;
  font: inherit;
  border-radius: 0;
}
text {
  font-size: 11px;
}
b {
  font-weight: bold;
}

.menubar {
  display: flex;
  height: 26px;
  border-top: 1px solid #7d929b;
  border-bottom: 1px solid #4c6672;
  background: linear-gradient(#b8d5e0, #9dbcc7);
}
.brand {
  display: flex;
  align-items: center;
  gap: 3px;
  width: 96px;
  padding-left: 2px;
  background: linear-gradient(#454d51, #2d3438);
}
.brand-text {
  display: flex;
  flex-direction: column;
}
.brand-name {
  font-size: 12px;
  line-height: 11px;
  color: #8fe01e;
}
.brand-tier {
  line-height: 11px;
  color: #fff;
}
.menus {
  display: flex;
  gap: 12px;
  padding: 0 7px;
}
.linkbox {
  width: 19px;
  border-left: 1px solid #6d8791;
}
.search {
  display: flex;
  align-items: center;
  width: 200px;
  padding: 0 3px 0 4px;
  background: #fff;
  border-left: 1px solid #6d8791;
  border-right: 1px solid #6d8791;
}
.search input {
  flex: 1;
  min-width: 0;
}
.search input::placeholder {
  color: #a8a8a8;
  font-style: italic;
}
.status {
  display: flex;
  margin-left: auto;
}
.cell {
  display: flex;
  align-items: center;
  padding: 0 5px;
  border-left: 1px solid #7b97a2;
}
.cell.pressed {
  width: 25px;
  padding: 0 3px;
  background: #84a0ab;
}
.cell.flag {
  width: 25px;
  padding: 0 3px;
}
.cell.push {
  gap: 3px;
  padding: 0 4px 0 3px;
}
.stack {
  display: flex;
  flex-direction: column;
  width: 10px;
  border: 1px solid #3b6a80;
}
.stack i {
  height: 6px;
  background: #4ed65a;
}
.stack i + i {
  border-top: 1px solid #3b6a80;
}
.led {
  width: 10px;
  height: 10px;
  background: #8ce89a;
  border: 1px solid #4a7a94;
}
.wins {
  gap: 4px;
  padding: 0 5px;
  color: #7e8f96;
}

.toolbar {
  display: flex;
  align-items: center;
  height: 30px;
  padding-left: 2px;
  background: #9bb7c3;
  border-bottom: 1px solid #54789e;
}
.toolbar button {
  display: flex;
  align-items: center;
  justify-content: center;
  width: 26px;
  height: 26px;
}
.toolbar .active {
  background: #8fa6b0;
  border: 1px solid #7a929c;
  border-radius: 3px;
}

.titlebar {
  display: flex;
  align-items: center;
  height: 25px;
  background: linear-gradient(#add3ff, #8db3e3);
  border-bottom: 1px solid #4c74a4;
}
.tcell {
  display: flex;
  align-items: center;
  align-self: stretch;
  border-right: 1px solid #4c74a4;
}
.logo {
  width: 25px;
  padding-left: 3px;
}
.chain {
  width: 18px;
}
.drop {
  gap: 4px;
  padding: 0 6px 0 4px;
  font-weight: bold;
}
.drop:nth-child(5) {
  font-weight: normal;
}
.drop select {
  appearance: none;
}
.w-sym {
  width: 25px;
}
.w-time {
  width: 56px;
}
.w-units {
  width: 52px;
}
.caret {
  border: 3px solid transparent;
  border-top-color: #000;
  border-bottom: 0;
}
.info-i {
  width: 12px;
  height: 12px;
  background: #f4f6f8;
  border: 1px solid #8b9aa6;
  color: #667;
  font: bold 9px/10px "Liberation Sans", sans-serif;
  text-align: center;
}
.titlebar > .info-i {
  margin-left: 7px;
}
.quote {
  margin-left: 6px;
  color: #a40020;
}
.dot {
  width: 8px;
  height: 8px;
  margin: 0 5px;
  border-radius: 50%;
  background: #3f9e10;
}
.refresh {
  display: flex;
  align-items: center;
  align-self: stretch;
  margin: 0 0 -1px auto;
  padding: 0 2px;
  background: #fff;
  border-left: 1px solid #4c74a4;
}
.winbtns {
  display: flex;
  gap: 4px;
  padding: 0 6px;
  color: #2c5d94;
}

.trade {
  display: flex;
  height: 48px;
  border-bottom: 1px solid #6e8690;
}
.summary {
  flex: 1;
  display: flex;
  justify-content: space-evenly;
  align-items: center;
  padding-bottom: 2px;
}
.gain {
  color: #0a930a;
}
.loss {
  color: #a00010;
}
.pos {
  display: flex;
  align-items: center;
}
.pos .loss {
  margin-left: 10px;
}
.xbox {
  margin: 0 8px 0 2px;
  border: 1px solid #9aa8b0;
  background: #eef2f5;
}
.order {
  display: flex;
  gap: 3px;
  padding: 2px 0 0 3px;
  border-left: 1px solid #6e8690;
}
.col {
  display: flex;
  flex-direction: column;
  align-items: center;
  line-height: 14px;
}
.side {
  gap: 3px;
  padding-top: 2px;
}
.sq {
  display: flex;
  align-items: center;
  justify-content: center;
  width: 18px;
  height: 18px;
  border: 1px solid #7a8a92;
  border-radius: 2px;
  background: #f4f6f6;
}
.sq.kb {
  height: 15px;
  background: #2a62c8;
  border-color: #2a62c8;
}
.qty input {
  width: 46px;
  height: 22px;
  padding: 0 2px;
  border: 1px solid #6e8690;
  border-radius: 2px;
  text-align: right;
}
.vsep {
  width: 1px;
  height: 34px;
  margin-top: 4px;
  background: #7a8a92;
}
.big {
  display: flex;
  align-items: center;
  justify-content: center;
  width: 28px;
  height: 28px;
  border: 1px solid #6e8690;
  border-radius: 2px;
  background: linear-gradient(#fff, #dfe5e8);
}
.dealhead {
  display: flex;
  gap: 4px;
  height: 15px;
}
.dealhead u {
  height: 13px;
  line-height: 13px;
  text-decoration: none;
  border-bottom: 1px dotted #000;
}
.info-i {
  font-style: normal;
}
.sell,
.buy {
  width: 85px;
  height: 28px;
  border-radius: 3px;
  color: #fff;
  font-size: 21px;
  line-height: 28px;
  white-space: nowrap;
}
.sell {
  background: linear-gradient(#f05a5a, #dc4646);
}
.buy {
  background: linear-gradient(#34c43c, #28b030);
}
sup {
  font-size: 10px;
  line-height: 8px;
  vertical-align: 7px;
}
.protect {
  align-items: flex-start;
  width: 79px;
  padding: 1px 0 0 6px;
}
.protect div,
.protect label {
  display: flex;
  align-items: center;
  gap: 5px;
}
.protect div {
  gap: 2px;
  height: 22px;
}
.protect label span {
  width: 8px;
}
.protect input[type="checkbox"] {
  appearance: none;
  width: 12px;
  height: 12px;
  border: 1px solid #7a8a92;
  border-radius: 2px;
}
.pts {
  width: 18px;
  height: 20px;
  border: 1px solid #6e8690;
  border-radius: 2px;
  text-align: center;
  color: #8a8f92;
}
.pts.wide {
  width: 24px;
}

.chart {
  flex: 1;
  display: flex;
  min-height: 600px;
}
.plot {
  position: relative;
  flex: 1;
  min-width: 0;
}
.canvas {
  position: absolute;
  inset: 0;
}
.thin {
  stroke: #3c9c3c;
  stroke-dasharray: 20 8;
}
.thick {
  stroke: #3aa43a;
  stroke-width: 2;
  stroke-dasharray: 21 9;
  stroke-opacity: 0.95;
}
.mid {
  stroke: #1414a8;
  stroke-dasharray: 12 12;
}
.cross {
  fill: none;
  stroke: #ee8c8c;
}
.up {
  stroke: #0a5a82;
  fill: #159bd3;
}
.dn {
  stroke: #b03434;
  fill: #ff6e6e;
}
.legend {
  position: absolute;
  top: 0;
  left: 0;
  display: flex;
  height: 17px;
  background: #c9d9e0;
  border-bottom: 1px solid #6e8690;
}
.legend button,
.legend label {
  display: flex;
  align-items: center;
  gap: 2px;
  padding: 0 2px 0 3px;
  border-right: 1px solid #6e8690;
  white-space: nowrap;
}
.legend .page {
  width: 20px;
  padding: 0;
  justify-content: center;
}
.legend input {
  appearance: none;
  width: 10px;
  height: 10px;
  border: 1px solid #6e8690;
}
.swatch {
  width: 10px;
  height: 10px;
}
.duo {
  background: linear-gradient(90deg, #159bd3 50%, #ff6e6e 50%);
}
.black {
  background: #000;
}
.day {
  position: absolute;
  top: 17px;
  left: 0;
  padding: 1px 1px 1px 2px;
  background: rgba(255, 255, 255, 0.7);
  border: solid #7a9098;
  border-width: 0 1px 1px 0;
}
.tag {
  position: absolute;
  right: 4px;
}
.clo {
  top: 404px;
}
.nine {
  top: 467px;
}
.position {
  position: absolute;
  top: 412px;
  left: 0;
}
.prow {
  display: flex;
  height: 20px;
  width: max-content;
  line-height: 18px;
}
.entry {
  width: 78px;
  text-align: center;
  background: linear-gradient(#ffb4b4, #f48080);
  border: 1px solid #a05a5a;
  border-radius: 3px 0 0 0;
}
.prow button {
  display: flex;
  align-items: center;
  justify-content: center;
  width: 18px;
  background: #f6f8f8;
  border: 1px solid #98a4aa;
  border-radius: 0 3px 3px 0;
}
.pnl {
  height: 19px;
  color: #0a930a;
  background: linear-gradient(#fff, #e8ecee);
  border: 1px solid #98a4aa;
  border-top: 0;
  border-radius: 0 0 3px 3px;
}
.pnl b {
  padding: 0 4px;
}
.pnl b + b {
  border-left: 1px solid #98a4aa;
}
.tooltip {
  position: absolute;
  top: 570px;
  left: 223px;
  width: 221px;
  padding: 2px 2px;
  background: rgba(255, 255, 255, 0.9);
  border: 1px solid #7a9098;
  border-radius: 3px;
}
.trow {
  display: flex;
  justify-content: space-between;
}
.trow:last-child {
  color: #960018;
}
.source {
  position: absolute;
  bottom: 0;
  left: 2px;
  line-height: 12px;
}

.prices {
  position: relative;
  width: 69px;
  border-left: 1px solid #7a9098;
  border-right: 1px solid #9aabb2;
}
.ptag {
  position: absolute;
  left: 4px;
  padding: 0 1px;
  border: 1px solid #7a9098;
  white-space: nowrap;
}
.cursor-price {
  top: 337px;
  background: #ffff20;
}
.close-price {
  top: 516px;
  background: #f4f6f6;
}
.last {
  top: 491px;
  right: 0;
  height: 21px;
  font-size: 16px;
  line-height: 19px;
  background: linear-gradient(#ffd83a, #f4b40c);
}
.last sup {
  vertical-align: 5px;
}
.timer {
  top: 512px;
  padding: 0 2px;
  border: 0;
  background: #90f090;
}

.times {
  position: relative;
  height: 18px;
  border-right: 1px solid #9aabb2;
  background: linear-gradient(#7a9098, #7a9098) 0 0 / calc(100% - 68px) 1px no-repeat;
}
.time-cursor {
  position: absolute;
  top: 4px;
  left: 85px;
  line-height: 12px;
  background: #ffff20;
  border: 1px solid #7a9098;
}

.footer {
  display: flex;
  align-items: center;
  height: 27px;
  background: #9bb7c3;
  border-top: 1px solid #7a9098;
  border-bottom: 2px solid #3f5c6a;
}
.fbtn,
.fdrop {
  display: flex;
  align-items: center;
  justify-content: center;
  align-self: stretch;
  width: 30px;
  border-right: 1px solid #7a9098;
}
.fdrop {
  width: 15px;
  border-right: 0;
}
.white {
  background: #f6f8f9;
}
.sharebtn {
  display: flex;
  align-items: center;
  align-self: stretch;
  gap: 4px;
  width: 67px;
  padding-left: 3px;
  background: linear-gradient(#2e98dc, #2084cc);
  color: #fff;
}
.ftool {
  display: flex;
  align-items: center;
  justify-content: center;
  width: 25px;
}
.ftool.zoom {
  width: 26px;
}
.chev {
  width: 17px;
  text-align: center;
  font-size: 17px;
  color: #44545c;
}
.scroll {
  flex: 1;
  display: flex;
  height: 16px;
  margin-right: 2px;
}
.scroll button {
  display: flex;
  align-items: center;
  justify-content: center;
  width: 15px;
  border: 1px solid #6e8a96;
  background: linear-gradient(#c2dae4, #a4c2ce);
}
.tri {
  border: 4px solid transparent;
  border-left-color: #000;
  border-right: 0;
}
.tri.left {
  border: 4px solid transparent;
  border-right-color: #000;
  border-left: 0;
}
.track {
  flex: 1;
  border: solid #6e8a96;
  border-width: 1px 0;
}
.thumb {
  width: 30%;
  height: 100%;
  margin-left: auto;
  border-left: 1px solid #6e8a96;
  background: linear-gradient(#b8dbe6, #9dc0cc);
}

.taskbar {
  display: flex;
  height: 40px;
  background: #101010;
  border-bottom: 1px solid #4a4a4a;
}
.taskbar button {
  display: flex;
  align-items: center;
  justify-content: center;
  width: 49px;
}
.taskbar .win {
  width: 46px;
}
.taskbar .chrome {
  border-bottom: 2px solid #a8a098;
}
.taskbar .candles {
  background: #363636;
}
.clock {
  display: flex;
  flex-direction: column;
  align-items: center;
  justify-content: space-evenly;
  margin-left: auto;
  padding-right: 7px;
  color: #fff;
  font-family: "Open Sans", sans-serif;
}
</style>
